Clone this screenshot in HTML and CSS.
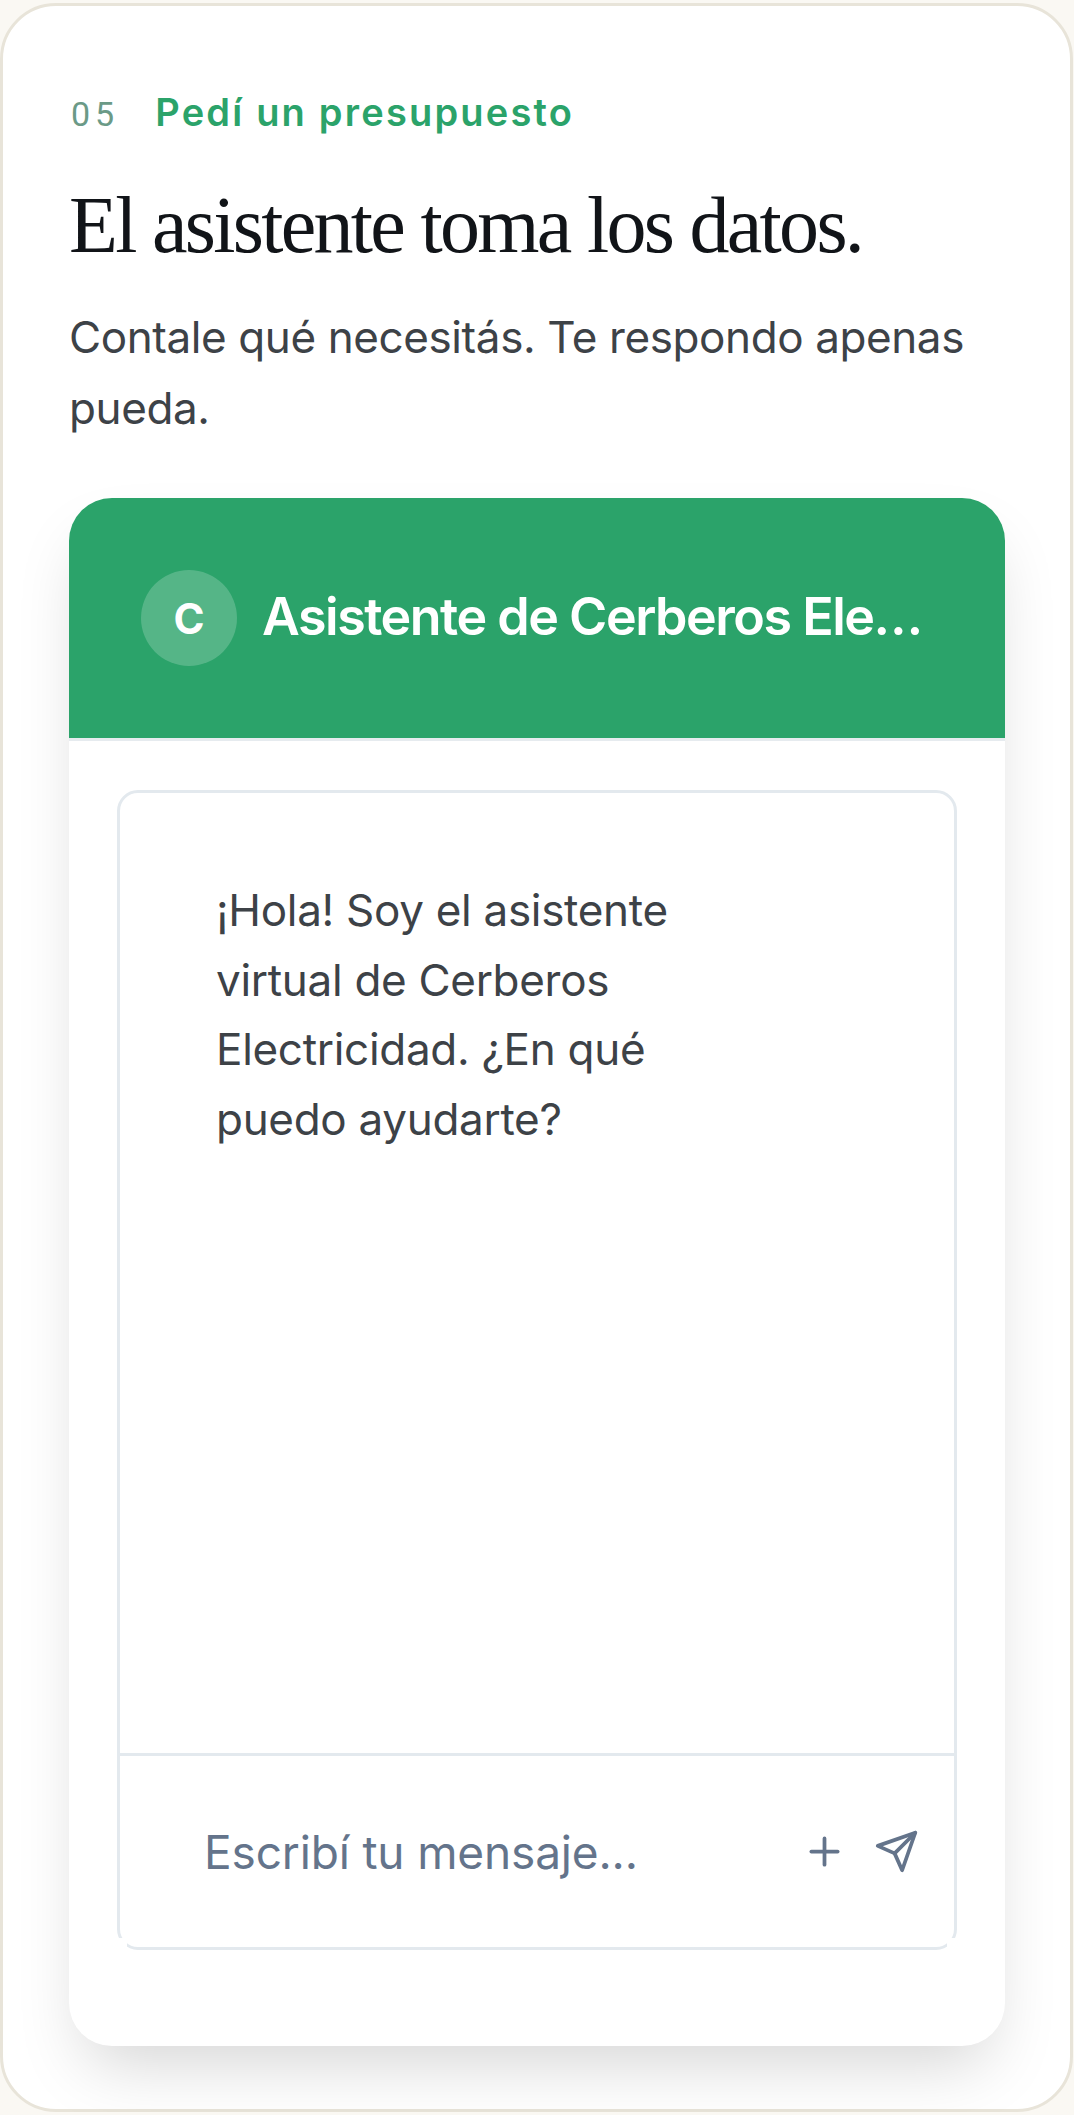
FILE: index.html
```html
<!DOCTYPE html>
<html lang="es">
<head>
  <meta charset="UTF-8" />
  <meta name="viewport" content="width=device-width, initial-scale=1.0"/>
  <title>Pedí un presupuesto</title>
  <link rel="stylesheet" href="styles.css">
</head>
<body>
  <section class="panel">
    <div class="eyebrow">
      <span class="eyebrow-num">05</span>
      <span class="eyebrow-label">Pedí un presupuesto</span>
    </div>
    <h2 class="heading">El asistente toma los datos.</h2>
    <p class="lead">Contale qué necesitás. Te respondo apenas pueda.</p>

    <div class="chat-card">
      <header class="chat-header">
        <div class="avatar">C</div>
        <div class="chat-title">Asistente de Cerberos Electricidad</div>
      </header>
      <div class="chat-body">
        <div class="chat-window">
          <div class="messages">
            <p class="message">¡Hola! Soy el asistente virtual de Cerberos Electricidad. ¿En qué puedo ayudarte?</p>
          </div>
          <div class="composer">
            <input type="text" class="composer-input" placeholder="Escribí tu mensaje..." />
            <button class="icon-btn" aria-label="Adjuntar">
              <svg viewBox="0 0 24 24" fill="none" stroke="currentColor" stroke-width="2" stroke-linecap="round" stroke-linejoin="round"><path d="M5 12h14"/><path d="M12 5v14"/></svg>
            </button>
            <button class="icon-btn" aria-label="Enviar">
              <svg viewBox="0 0 24 24" fill="none" stroke="currentColor" stroke-width="2" stroke-linecap="round" stroke-linejoin="round"><path d="M22 2 11 13"/><path d="M22 2 15 22 11 13 2 9Z"/></svg>
            </button>
          </div>
        </div>
      </div>
    </div>
  </section>
</body>
</html>
```

FILE: styles.css
```css
* {
  box-sizing: border-box;
}
body {
  margin: 0;
  background: #faf8f3;
  font-family: Inter, 'Noto Sans', sans-serif;
}
.panel {
  width: 1073px;
  height: 2109px;
  margin-top: 3px;
  padding: 84px 66px 0 66px;
  background: #fff;
  border: 3px solid #e8e4d9;
  border-radius: 56px;
}
.eyebrow {
  display: flex;
  align-items: baseline;
  gap: 36px;
  height: 44px;
  line-height: 44px;
  padding-left: 2px;
}
.eyebrow-num {
  font-family: Roboto, sans-serif;
  font-size: 34px;
  letter-spacing: 5px;
  color: #6b9a87;
}
.eyebrow-label {
  font-size: 38px;
  font-weight: 600;
  letter-spacing: 2.2px;
  color: #2ba36a;
}
.heading {
  margin: 46px 0 0 0;
  font-family: 'Liberation Serif', serif;
  font-size: 80px;
  font-weight: 400;
  line-height: 90px;
  letter-spacing: -2.7px;
  color: #111418;
}
.lead {
  margin: 32px 0 0 0;
  font-size: 44px;
  line-height: 71px;
  letter-spacing: -0.4px;
  color: #3d4247;
}
.chat-card {
  margin-top: 54px;
  width: 936px;
  height: 1548px;
  background: #fff;
  border-radius: 43px;
  box-shadow: 0 33px 66px -16px rgba(0, 0, 0, 0.17);
}
.chat-header {
  display: flex;
  align-items: center;
  gap: 25px;
  height: 240px;
  padding: 0 72px;
  background: #2ba36a;
  border-radius: 43px 43px 0 0;
}
.avatar {
  flex: 0 0 96px;
  display: flex;
  justify-content: center;
  align-items: center;
  height: 96px;
  border-radius: 50%;
  background: rgba(255, 255, 255, 0.2);
  color: #fff;
  font-size: 42px;
  font-weight: 700;
}
.chat-title {
  min-width: 0;
  padding-bottom: 3px;
  color: #fff;
  font-size: 52px;
  font-weight: 600;
  letter-spacing: -1.5px;
  white-space: nowrap;
  overflow: hidden;
  text-overflow: ellipsis;
}
.chat-body {
  padding: 49px 48px 0 48px;
  border-top: 3px solid #e6ebef;
}
.chat-window {
  display: flex;
  flex-direction: column;
  height: 1160px;
  border: 3px solid #e3e9ee;
  border-radius: 21px;
}
.messages {
  flex: 1;
  padding: 83px 96px 0 96px;
}
.message {
  margin: 0;
  max-width: 480px;
  font-size: 44px;
  line-height: 69.6px;
  letter-spacing: -0.3px;
  color: #3d4247;
}
.composer {
  position: relative;
  display: flex;
  align-items: center;
  height: 194px;
  padding: 0 35px 0 84px;
  gap: 27px;
  border-top: 3px solid #e3e9ee;
}
/* the footer's square corners sit on top of the window's round border */
.composer::before,
.composer::after {
  content: '';
  position: absolute;
  bottom: -3px;
  width: 10px;
  height: 12px;
  background: #fff;
}
.composer::before {
  left: -3px;
}
.composer::after {
  right: -3px;
}
.composer-input {
  flex: 1;
  min-width: 0;
  border: none;
  outline: none;
  padding: 0;
  background: transparent;
  font-family: inherit;
  font-size: 46px;
  letter-spacing: -0.15px;
  color: #64748b;
}
.composer-input::placeholder {
  color: #64748b;
  opacity: 1;
}
.icon-btn {
  flex: 0 0 45px;
  width: 45px;
  height: 45px;
  padding: 0;
  border: none;
  background: none;
  color: #64748b;
}
.icon-btn svg {
  display: block;
  width: 45px;
  height: 45px;
}
```
